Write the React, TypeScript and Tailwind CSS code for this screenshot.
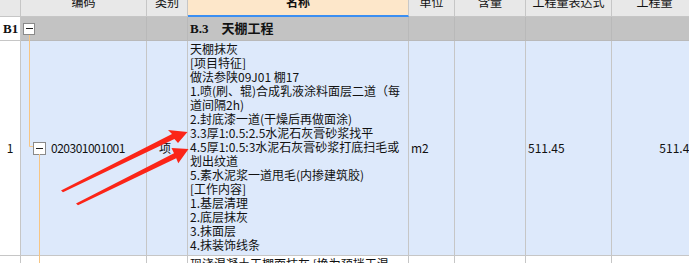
import React from "react";

const cols = "grid grid-cols-[21px_126px_41px_221px_46px_71px_86px_86px] w-[698px]";

const headers = ["", "编码", "类别", "名称", "单位", "含量", "工程量表达式", "工程量"];

const nameLines = [
  "天棚抹灰",
  "[项目特征]",
  "做法参陕09J01 棚17",
  "1.喷(刷、辊)合成乳液涂料面层二道（每",
  "道间隔2h)",
  "2.封底漆一道(干燥后再做面涂)",
  "3.3厚1:0.5:2.5水泥石灰膏砂浆找平",
  "4.5厚1:0.5:3水泥石灰膏砂浆打底扫毛或",
  "划出纹道",
  "5.素水泥浆一道甩毛(内掺建筑胶)",
  "[工作内容]",
  "1.基层清理",
  "2.底层抹灰",
  "3.抹面层",
  "4.抹装饰线条",
];

function MinusBox({ size }: { size: string }) {
  return (
    <div className={`${size} border border-[#8a8a8a] bg-white flex items-center justify-center shrink-0`}>
      <div className="w-[7px] h-px bg-[#222]" />
    </div>
  );
}

export default function App() {
  return (
    <div
      className="relative w-[689px] h-[263px] overflow-hidden bg-white text-[12px] text-[#111]"
      style={{ fontFamily: '"Noto Sans CJK SC", "Noto Sans", sans-serif' }}
    >
      {/* header */}
      <div className={cols}>
        {headers.map((h, i) =>
          i === 3 ? (
            <div
              key={i}
              className="h-[17px] bg-[#fde7ca] border-r border-[#c8c8c8] border-b-2 border-b-[#3b8ff2] text-center font-bold leading-[12px] overflow-hidden"
            >
              <div className="-mt-[4px]">{h}</div>
            </div>
          ) : (
            <div
              key={i}
              className="h-[17px] bg-[#e8e8e8] border-r border-b border-[#c6c6c6] text-center leading-[12px] overflow-hidden"
            >
              <div className="-mt-[4px]">{h}</div>
            </div>
          )
        )}
      </div>

      {/* B1 group row */}
      <div className={cols}>
        <div
          className="h-[24px] bg-white border-r border-b border-[#c6c6c6] flex items-center pl-[3px] font-bold text-[13px]"
          style={{ fontFamily: '"Liberation Serif", "Noto Sans CJK SC", serif' }}
        >
          B1
        </div>
        <div className="h-[24px] bg-[#c3c3c3] border-r border-b border-[#b9b9b9] flex items-center pl-[2px]">
          <MinusBox size="w-[12px] h-[12px]" />
        </div>
        <div className="h-[24px] bg-[#c3c3c3] border-r border-b border-[#b9b9b9]" />
        <div
          className="h-[24px] bg-[#c3c3c3] border-r border-b border-[#b9b9b9] flex items-center pl-[2px] font-bold text-[13px] whitespace-pre"
          style={{ fontFamily: '"Liberation Serif", "Noto Sans CJK SC", serif' }}
        >
          B.3    天棚工程
        </div>
        <div className="h-[24px] bg-[#c3c3c3] border-r border-b border-[#b9b9b9]" />
        <div className="h-[24px] bg-[#c3c3c3] border-r border-b border-[#b9b9b9]" />
        <div className="h-[24px] bg-[#c3c3c3] border-r border-b border-[#b9b9b9]" />
        <div className="h-[24px] bg-[#c3c3c3] border-b border-[#b9b9b9]" />
      </div>

      {/* main item row */}
      <div className={cols}>
        <div className="h-[215px] bg-white border-r border-b border-[#c6c6c6] flex items-center justify-center">
          1
        </div>
        <div className="h-[215px] bg-[#dde9fb] border-r border-b border-[#c6c6c6] flex items-center pl-[12px] gap-[5px]">
          <MinusBox size="w-[13px] h-[13px]" />
          <span className="tracking-[-0.5px]">020301001001</span>
        </div>
        <div className="h-[215px] bg-[#dde9fb] border-r border-b border-[#c6c6c6] flex items-center pl-[12px]">
          项
        </div>
        <div className="h-[215px] bg-[#dde9fb] border-r border-b border-[#c6c6c6] pl-[2px] pt-[1px] leading-[14px]">
          {nameLines.map((l, i) => (
            <div key={i} className="whitespace-nowrap">
              {l}
            </div>
          ))}
        </div>
        <div className="h-[215px] bg-[#dde9fb] border-r border-b border-[#c6c6c6] flex items-center pl-[2px]">
          m2
        </div>
        <div className="h-[215px] bg-[#dde9fb] border-r border-b border-[#c6c6c6]" />
        <div className="h-[215px] bg-[#dde9fb] border-r border-b border-[#c6c6c6] flex items-center pl-[2px]">
          511.45
        </div>
        <div className="h-[215px] bg-[#dde9fb] border-b border-[#c6c6c6] flex items-center justify-end pr-[2px]">
          511.45
        </div>
      </div>

      {/* next row, cut off */}
      <div className={cols}>
        <div className="h-[20px] border-r border-[#c6c6c6]" />
        <div className="h-[20px] border-r border-[#c6c6c6]" />
        <div className="h-[20px] border-r border-[#c6c6c6]" />
        <div className="h-[20px] border-r border-[#c6c6c6] pl-[2px] pt-[1px] leading-[14px] whitespace-nowrap">
          现浇混凝土天棚面抹灰 [换为预拌干混
        </div>
        <div className="h-[20px] border-r border-[#c6c6c6]" />
        <div className="h-[20px] border-r border-[#c6c6c6]" />
        <div className="h-[20px] border-r border-[#c6c6c6]" />
        <div className="h-[20px]" />
      </div>

      {/* tree connectors and annotation arrows */}
      <svg className="absolute inset-0 pointer-events-none" width="689" height="263">
        <path d="M29.5 35 V146.5 H33" stroke="#f6c584" strokeWidth="1" fill="none" />
        <path d="M39.5 154 V263" stroke="#f6c584" strokeWidth="1" fill="none" />
        <polygon
          points="61,190.5 172,134 168,130 187.5,132 178,143 174.4,139 63,192.2"
          fill="#fb2518"
        />
        <polygon
          points="76,203.5 174,153.2 171.5,148 188.5,149 178.3,163.3 176.2,158.3 78,205.2"
          fill="#fb2518"
        />
      </svg>
    </div>
  );
}
